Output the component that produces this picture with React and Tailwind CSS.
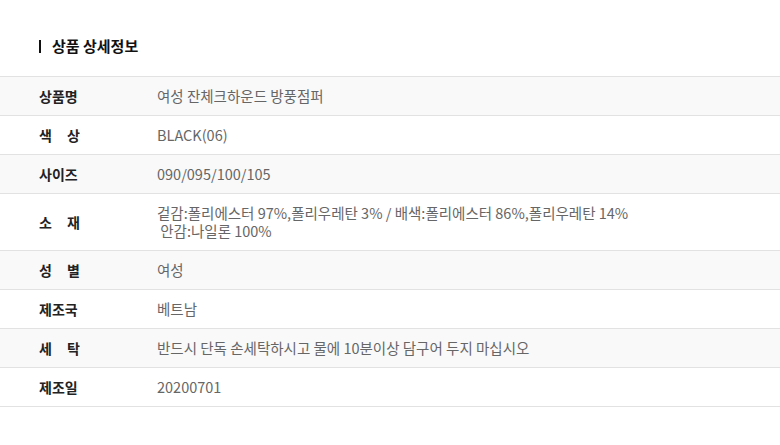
const rows = [
  { label: '상품명', value: '여성 잔체크하운드 방풍점퍼' },
  { label: '색상', spread: true, value: 'BLACK(06)' },
  { label: '사이즈', value: '090/095/100/105' },
  {
    label: '소재',
    spread: true,
    value: (
      <>
        <div>겉감:폴리에스터 97%,폴리우레탄 3% / 배색:폴리에스터 86%,폴리우레탄 14%</div>
        <div>&nbsp;안감:나일론 100%</div>
      </>
    ),
    tall: true,
  },
  { label: '성별', spread: true, value: '여성' },
  { label: '제조국', value: '베트남' },
  { label: '세탁', spread: true, value: '반드시 단독 손세탁하시고 물에 10분이상 담구어 두지 마십시오' },
  { label: '제조일', value: '20200701' },
];

const App = () => {
  return (
    <div className="w-[780px] h-[445px] bg-white font-['Noto_Sans_CJK_KR','Noto_Sans',sans-serif]">
      <div className="pt-[37px] pl-[39px] h-[76px]">
        <h2 className="flex items-center gap-[11px] text-[15px] font-bold text-[#111] leading-[18px]">
          <span className="block w-[2px] h-[13px] bg-[#111]" />
          상품 상세정보
        </h2>
      </div>

      <div className="border-t border-[#e2e2e2]">
        {rows.map((row, i) => (
          <div
            key={i}
            className={`flex items-center border-b border-[#e2e2e2] ${
              row.tall ? 'h-[57px]' : 'h-[39px]'
            } ${i % 2 === 0 ? 'bg-[#f9f9f9]' : 'bg-white'}`}
          >
            <div className="w-[157px] pl-[39px] shrink-0">
              {row.spread ? (
                <div className="flex justify-between w-[41px] text-[14px] font-bold text-[#222]">
                  <span>{row.label[0]}</span>
                  <span>{row.label[1]}</span>
                </div>
              ) : (
                <div className="text-[14px] font-bold text-[#222]">{row.label}</div>
              )}
            </div>
            <div className="text-[14.5px] text-[#666] leading-[18px]">{row.value}</div>
          </div>
        ))}
      </div>
    </div>
  );
};

export default App;
